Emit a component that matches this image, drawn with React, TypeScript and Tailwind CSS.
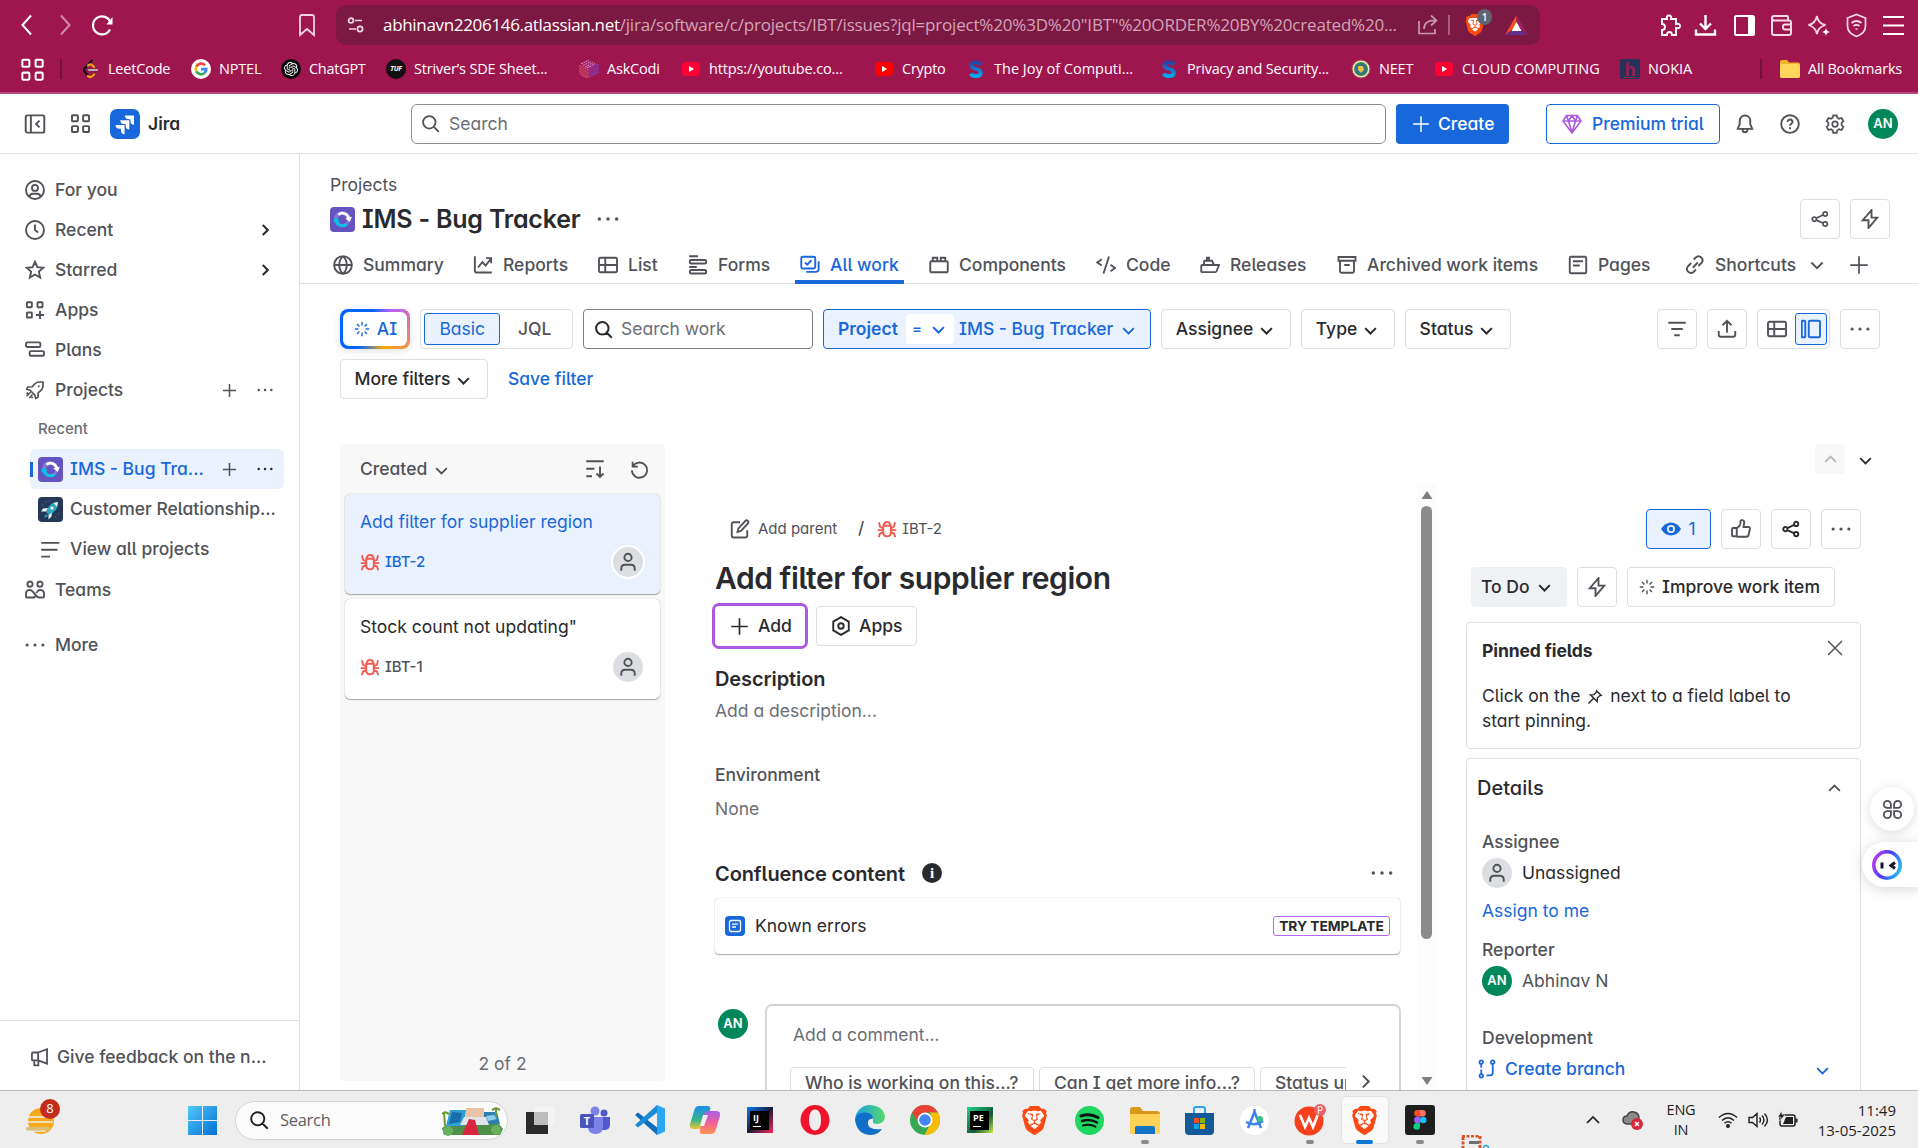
import React from 'react';
import { SiBrave, SiOpenai } from 'react-icons/si';

type IcProps = { d: string; s?: number; w?: number; fill?: string; className?: string };

/** 16-unit stroke icon. */
function Ic({ d, s = 20, w = 1.5, fill = 'none', className = '' }: IcProps) {
  return (
    <svg width={s} height={s} viewBox="0 0 16 16" fill={fill} stroke="currentColor" strokeWidth={w} className={'shrink-0 ' + className}>
      <path d={d} />
    </svg>
  );
}

const P = {
  search: 'M7 1.75a5.25 5.25 0 1 1 0 10.5a5.25 5.25 0 1 1 0-10.5M10.8 10.8L15 15',
  plus: 'M8 1v14M1 8h14',
  down: 'M3.5 6L8 10.5L12.5 6',
  up: 'M3.5 10L8 5.5L12.5 10',
  right: 'M6 3.5L10.5 8L6 12.5',
  grid: 'M2.2 1.75h3.1q.7 0 .7.7v3.1q0 .7-.7.7H2.2q-.7 0-.7-.7V2.45q0-.7.7-.7zM10.7 1.75h3.1q.7 0 .7.7v3.1q0 .7-.7.7h-3.1q-.7 0-.7-.7V2.45q0-.7.7-.7zM2.2 10h3.1q.7 0 .7.7v3.1q0 .7-.7.7H2.2q-.7 0-.7-.7v-3.1q0-.7.7-.7zM10.7 10h3.1q.7 0 .7.7v3.1q0 .7-.7.7h-3.1q-.7 0-.7-.7v-3.1q0-.7.7-.7z',
  apps: 'M2 1.75h3q.5 0 .5.5v3q0 .5-.5.5H2q-.5 0-.5-.5v-3q0-.5.5-.5zM10.5 1.75h3q.5 0 .5.5v3q0 .5-.5.5h-3q-.5 0-.5-.5v-3q0-.5.5-.5zM2 10h3q.5 0 .5.5v3q0 .5-.5.5H2q-.5 0-.5-.5v-3q0-.5.5-.5zM12 8.8v6.4M8.8 12h6.4',
  sidebar: 'M2.5 1.75h11q1.25 0 1.25 1.25v10q0 1.25-1.25 1.25h-11q-1.25 0-1.25-1.25V3q0-1.25 1.25-1.25zM5 2v12M11.3 5.5L8.8 8l2.5 2.5',
  bell: 'M8 1.2c-2.6 0-4.2 1.9-4.2 4.3v2.6L2.2 11.9h11.6L12.2 8.1V5.5c0-2.4-1.6-4.3-4.2-4.3zM6 12.2c0 3.2 4 3.2 4 0',
  help: 'M8 .95a7.05 7.05 0 1 1 0 14.1a7.05 7.05 0 1 1 0-14.1M6 6.4c0-2.7 4-2.6 4 0c0 1.4-2 1.4-2 3M8 10.6v1.5',
  gear: 'M8 5.8a2.2 2.2 0 1 1 0 4.4a2.2 2.2 0 1 1 0-4.4M6.6 1h2.8l.5 2l1.4.8l2-.6l1.4 2.4L13.3 7v2l1.4 1.4l-1.4 2.4l-2-.6l-1.4.8l-.5 2H6.6l-.5-2l-1.4-.8l-2 .6l-1.4-2.4L2.7 9V7L1.3 5.6l1.4-2.4l2 .6L6.1 3z',
  userCircle: 'M8 .8a7.2 7.2 0 1 1 0 14.4a7.2 7.2 0 1 1 0-14.4M8 3.9a2.4 2.4 0 1 1 0 4.8a2.4 2.4 0 1 1 0-4.8M3.6 13.4c.3-1.6 1.3-2.4 2.6-2.4h3.6c1.3 0 2.3.8 2.6 2.4',
  clock: 'M8 .8a7.2 7.2 0 1 1 0 14.4a7.2 7.2 0 1 1 0-14.4M8 3.5V8l2.5 2',
  star: 'M8 1.4l1.9 4.3l4.7.5l-3.5 3.1l1 4.7L8 11.6L3.9 14l1-4.7L1.4 6.2l4.7-.5z',
  plans: 'M1.9 1.9h9.3q1.1 0 1.1 1.1v1.5q0 1.1-1.1 1.1H1.9Q.8 5.6.8 4.5V3q0-1.1 1.1-1.1zM4.8 8.9h9.3q1.1 0 1.1 1.1v1.5q0 1.1-1.1 1.1H4.8q-1.1 0-1.1-1.1V10q0-1.1 1.1-1.1z',
  rocket: 'M14.4 1.6h-3.2C9 1.6 7.6 3 5.8 5.4L2.2 5.6L1.4 7.4L4 8.2l3.8 3.8l.8 2.6l1.8-.8l.2-3.6c2.4-1.8 3.8-3.2 3.8-5.4zM11 4.3v1.4M4.4 9.8L1.2 13M6 11.6L3.4 14.4M2.4 10L1.2 11.2M6.2 13.6l-1 1',
  lines: 'M1 2.25h14.5M1 7.75h13M1 13.25h7',
  teams: 'M4 1.2a2.1 2.1 0 1 1 0 4.2a2.1 2.1 0 1 1 0-4.2M12 1.2a2.1 2.1 0 1 1 0 4.2a2.1 2.1 0 1 1 0-4.2M4.5 14H1.6q-.8 0-.8-.8v-2.4c0-3 4-3.6 5.4-1.4l3.4 3.8q.8.8 1.8.8h3q.8 0 .8-.8v-2.4c0-3-4-3.6-5.4-1.4l-.8 1M4.2 14h3l1.1-1',
  globe: 'M8 .9a7.1 7.1 0 1 1 0 14.2a7.1 7.1 0 1 1 0-14.2M8 .9c-4 3.6-4 10.6 0 14.2c4-3.6 4-10.6 0-14.2M1 8h14',
  chart: 'M1.5 1v11.5q0 1.5 1.5 1.5h12M4 10l3.5-4.2l2.6 2.6L14.3 3M10.5 2.5h4v4',
  table: 'M2.2 2.2h11.6q1.4 0 1.4 1.4v8.8q0 1.4-1.4 1.4H2.2q-1.4 0-1.4-1.4V3.6q0-1.4 1.4-1.4zM5.8 2.4v11.4M1 8h14',
  forms: 'M1 1h7M2.4 4h11.2q.9 0 .9.9v1q0 .9-.9.9H2.4q-.9 0-.9-.9v-1q0-.9.9-.9zM1 9.6h6M2.4 12h11.2q.9 0 .9.9v1q0 .9-.9.9H2.4q-.9 0-.9-.9v-1q0-.9.9-.9z',
  allwork: 'M2.2 1.4h8.8q1.2 0 1.2 1.2v7q0 1.2-1.2 1.2H2.2Q1 10.8 1 9.6v-7q0-1.2 1.2-1.2zM4 6l1.8 1.8L9.2 4.2M14.9 5v6.2q0 2.3-2.3 2.3H5',
  components: 'M2 5h12q1 0 1 1v6.5q0 1.3-1.3 1.3H2.3Q1 13.8 1 12.5V6q0-1 1-1zM3 5V2.2h3.6V5M9.4 5V2.2H13V5',
  code: 'M4.6 3.4L1 6l3.6 2.4M10.4 1.2L6 14.8M11.6 7.8L15.2 10.4l-3.6 2.6',
  ship: 'M3.2 8V5.4q0-.8.8-.8h5.6L11.2 8M5.6 4.4V2.2h1.6v2M1 13.6V8.8q0-.8.8-.8h13.4l-2 5q-.3.7-1 .7H1.8Q1 13.7 1 12.9z',
  archive: 'M1.2 1.6h13.6v3H1.2zM2.4 4.8v8.2q0 1.2 1.2 1.2h8.8q1.2 0 1.2-1.2V4.8M5.8 8h4.4',
  page: 'M2.4 1.4h11.2q1 0 1 1v11.2q0 1-1 1H2.4q-1 0-1-1V2.4q0-1 1-1zM4 5h8M4 8.4h5.4',
  link: 'M6.2 10.2l4-4.2M7 3.6L8.6 2c3-2.8 7.2 1.4 4.6 4.4l-2.6 2.4M5 6.4L2.4 9c-2.6 3 1.4 7 4.4 4.6l2-2',
  share: 'M3 6.2a1.9 1.9 0 1 1 0 3.8a1.9 1.9 0 1 1 0-3.8M12.6 1.6a1.9 1.9 0 1 1 0 3.8a1.9 1.9 0 1 1 0-3.8M12.6 10.6a1.9 1.9 0 1 1 0 3.8a1.9 1.9 0 1 1 0-3.8M4.8 7.2l6-2.8M4.8 9l6 2.8',
  bolt: 'M9.2.9v6h4.6L6.8 15.2V9H2.2z',
  filter: 'M1 3h14M3.4 8h9.2M5.8 13h4.4',
  upload: 'M8 11V1.6M4.4 5L8 1.4L11.6 5M1.4 9.6v3q0 1.6 1.6 1.6h10q1.6 0 1.6-1.6v-3',
  panel: 'M1.2 1.4h1.6q.6 0 .6.6v12q0 .6-.6.6H1.2q-.6 0-.6-.6V2q0-.6.6-.6zM7.2 1.4h7q1 0 1 1v11.2q0 1-1 1h-7q-1 0-1-1V2.4q0-1 1-1z',
  sortDown: 'M1 1.8h14M1 7.8h6.6M1 13.8h4.6M12 6v8.4M9.2 11.6l2.8 2.8l2.8-2.8',
  refresh: 'M2.2 1.4v4.2h4.4M2.4 5.4a6.4 6.4 0 1 1-.8 3.2',
  bug: 'M5 5.4h6v5.4q0 3-3 3q-3 0-3-3zM5.4 5.4c0-4 5.2-4 5.2 0M5 7.6L2.4 6.2L1.6 2.6M11 7.6l2.6-1.4l.8-3.6M.6 8.9H5M11 8.9h4.4M5 10.6l-2.6 1l-1 3M11 10.6l2.6 1l1 3',
  person: 'M8 1.4a2.9 2.9 0 1 1 0 5.8a2.9 2.9 0 1 1 0-5.8M2.6 15v-1.6q0-3.2 3.2-3.2h4.4q3.2 0 3.2 3.2V15',
  edit: 'M8 2.6H3Q1.4 2.6 1.4 4.2v9Q1.4 14.8 3 14.8h9.2q1.6 0 1.6-1.6V9M12.4 1.4q.9-.7 1.8 0t.3 2L8.8 9.6L6 10.4l.7-2.9z',
  hexagon: 'M8 .9l6.2 3.6v7L8 15.1l-6.2-3.6v-7zM8 5.8a2.2 2.2 0 1 1 0 4.4a2.2 2.2 0 1 1 0-4.4',
  thumb: 'M1.6 7.2h3v6.6h-3q-.8 0-.8-.8V8q0-.8.8-.8zM4.6 7.4L7 5.2q.6-.8.6-3.4c.2-1.6 3.2-1.2 3 1.2L10 6.4h3.8q1.6 0 1.3 1.6l-1 4.6q-.3 1.6-1.8 1.6H4.6',
  close: 'M1.8 1.8l12.4 12.4M14.2 1.8L1.8 14.2',
  pin: 'M9.6 1.8l4.6 4.6l-1.6.4L10.4 9l-.2 3.6L3.4 5.8L7 5.6l2.2-2.2zM6.4 9.4L1.4 14.4',
  branch: 'M3.4 1.1a1.4 1.4 0 1 1 0 2.8a1.4 1.4 0 1 1 0-2.8M3.4 12a1.4 1.4 0 1 1 0 2.8a1.4 1.4 0 1 1 0-2.8M12.6 1.1a1.4 1.4 0 1 1 0 2.8a1.4 1.4 0 1 1 0-2.8M3.4 4v3M3.4 8.4V12M12.6 4v7q0 2-2 2H7.6',
  spark: 'M8 .8v3.6M8 11.6v3.6M.8 8h3.6M11.6 8h3.6M3 3l2.4 2.4M10.6 10.6L13 13M13 3l-2.4 2.4M5.4 10.6L3 13',
  horn: 'M1.600 3.800h4.400v6.600H1.600q-.8 0-.8-.8V4.600q0-.8.8-.8zM6 3.800L13.500 1v12.200L6 10.400M2.800 10.600v4h3.400v-4',
  clover: 'M6.8 6.8H4A2.7 2.7 0 1 1 6.8 4zM9.2 6.8V4A2.7 2.7 0 1 1 12 6.8zM6.8 9.2V12A2.7 2.7 0 1 1 4 9.2zM9.2 9.2H12A2.7 2.7 0 1 1 9.2 12z',
};

function Dots({ className = '', s = 20 }: { className?: string; s?: number }) {
  return (
    <svg width={s} height={s} viewBox="0 0 16 16" fill="currentColor" className={'shrink-0 ' + className}>
      <circle cx="1.7" cy="8" r="1.25" /><circle cx="8" cy="8" r="1.25" /><circle cx="14.3" cy="8" r="1.25" />
    </svg>
  );
}

/* ---------- browser chrome ---------- */

const YT = ({ c }: { c: string }) => (
  <svg width="20" height="20" viewBox="0 0 20 20"><rect x="1" y="3" width="18" height="14" rx="4" fill={c} /><path d="M8 7l5 3-5 3z" fill="#fff" /></svg>
);
const SIcon = () => (
  <svg width="20" height="20" viewBox="0 0 20 20" fill="none"><defs><linearGradient id="sg" x1="0" y1="0" x2="0" y2="1"><stop offset="0" stopColor="#2b3fa0" /><stop offset="1" stopColor="#00a8ee" /></linearGradient></defs><path d="M15 5.6C13 2.6 5.6 2 5.4 6.2c0 4.4 9.400 2.600 9.400 7.400C14.600 18.200 6.600 17.800 4.600 14.600" stroke="url(#sg)" strokeWidth="4" /></svg>
);

const bookmarks: { label: string; cls: string; icon: React.ReactNode; t: string }[] = [
  { label: 'LeetCode', cls: 'w-[111px]', t: 'tracking-[-0.2px]', icon: <svg width="20" height="20" viewBox="0 0 20 20" fill="none" strokeLinecap="round" strokeWidth="2.2"><path d="M12 1.500L5 9" stroke="#111" /><path d="M5 9q-2 2 0 4l3.500 4q2 1.600 4 0l2-2" stroke="#111" /><path d="M8 6.500q2-2 4-.5l2 2M8 17q2 2 4.500 0l1.800-1.800" stroke="#f5a31c" /><path d="M9 11h8" stroke="#b3b3b3" /></svg> },
  { label: 'NPTEL', cls: 'w-[90px]', t: 'tracking-[-0.2px]', icon: <svg width="20" height="20" viewBox="0 0 20 20" fill="none" strokeWidth="2.600"><circle cx="10" cy="10" r="10" fill="#fff" /><path d="M14 6.300A5.300 5.300 0 0 0 5.300 7.600" stroke="#ea4335" /><path d="M5.300 7.600a5.300 5.300 0 0 0 0 4.800" stroke="#fbbc05" /><path d="M5.300 12.400A5.300 5.300 0 0 0 13.400 14" stroke="#34a853" /><path d="M13.400 14q1.900-1.500 1.900-3.900H10" stroke="#4285f4" /></svg> },
  { label: 'ChatGPT', cls: 'w-[105px]', t: 'tracking-[-0.28px]', icon: <span className="flex h-5 w-5 items-center justify-center rounded-full bg-[#0a0a0a]"><SiOpenai size={14} /></span> },
  { label: 'Striver’s SDE Sheet...', cls: 'w-[193px]', t: 'tracking-[-0.17px]', icon: <span className="flex h-5 w-5 items-center justify-center rounded-full bg-[#111] text-[7px] font-bold italic tracking-tight">TUF</span> },
  { label: 'AskCodi', cls: 'w-[102px]', t: 'tracking-[-0.2px]', icon: <svg width="20" height="20" viewBox="0 0 20 20" fill="none" strokeWidth="1.100" strokeDasharray="2 .7"><path d="M1 6v9M3 7v10M5 8v10M7 9v10M9 10v9" stroke="#e0607a" /><path d="M2 5l8-4M4 6.500l8-4M6 8l8-4.500M8 9l8-4.500" stroke="#d98ad0" /><path d="M11 8v11M13 7v11M15 6v11M17 5v11M19 5v9" stroke="#7a4fd8" /></svg> },
  { label: 'https://youtube.co...', cls: 'w-[193px]', t: 'tracking-[-0.13px]', icon: <YT c="#ff0033" /> },
  { label: 'Crypto', cls: 'w-[92px]', t: 'tracking-[-0.25px]', icon: <YT c="#ff0000" /> },
  { label: 'The Joy of Computi...', cls: 'w-[193px]', t: 'tracking-[0px]', icon: <SIcon /> },
  { label: 'Privacy and Security...', cls: 'w-[192px]', t: 'tracking-[-0.2px]', icon: <SIcon /> },
  { label: 'NEET', cls: 'w-[83px]', t: 'tracking-[-0.2px]', icon: <svg width="20" height="20" viewBox="0 0 20 20"><circle cx="10" cy="10" r="9" fill="#e8e4d8" stroke="#b04a4a" /><circle cx="10" cy="10" r="6.200" fill="#2d6f9a" stroke="#3f8a3a" strokeWidth="1.500" /><path d="M7 7h5l1 4-3 3-3-3z" fill="#e3c23b" /></svg> },
  { label: 'CLOUD COMPUTING', cls: 'w-[186px]', t: 'tracking-[-0.1px]', icon: <YT c="#ff0033" /> },
  { label: 'NOKIA', cls: 'w-[100px]', t: 'tracking-[0px]', icon: <span className="flex h-5 w-5 items-center justify-center rounded-[2px] bg-[#27325a] text-[17px] leading-none font-bold text-[#9c1c50] underline">h</span> },
];

/** Orange shield with the white lion showing through its cut-outs. */
function Brave({ s = 24 }: { s?: number }) {
  return (
    <span className="relative flex shrink-0">
      <svg width={s} height={s} viewBox="0 0 24 24" className="absolute inset-0"><path d="M5 4h14l1 6-2.500 8L12 22l-5.500-4L4 10z" fill="#fff" /></svg>
      <SiBrave size={s} className="relative text-[#fb4b12]" />
    </span>
  );
}

function BrowserChrome() {
  const st = { fill: 'none', stroke: 'currentColor', strokeWidth: 2 } as const;
  return (
    <div className="h-[94px] border-b-2 border-[#b34a7b] bg-[#9f164f] font-['Open_Sans','Noto_Sans',sans-serif] text-white">
      <div className="flex h-[50px] items-center">
        <svg className="ml-[17px]" width="20" height="24" viewBox="0 0 20 24" {...st}><path d="M14 2.500L5.500 12l8.500 9.500" /></svg>
        <svg className="ml-[18px] opacity-50" width="20" height="24" viewBox="0 0 20 24" {...st}><path d="M6 2.500l8.500 9.500L6 21.500" /></svg>
        <svg className="ml-[15px]" width="24" height="24" viewBox="0 0 24 24" {...st}><path d="M20 16.500a9 9 0 1 1 .5-7" strokeWidth="2.200" /><path d="M22.500 4v7.500h-6z" fill="currentColor" stroke="none" /></svg>
        <svg className="ml-[181px]" width="24" height="24" viewBox="0 0 24 24" fill="none" stroke="#f0d6e2" strokeWidth="1.800"><path d="M5 4q0-2 2-2h10q2 0 2 2v18l-7-6-7 6z" /></svg>
        <div className="ml-[17px] flex h-10 w-[1204px] items-center rounded-[10px] bg-[#7b1942]">
          <svg className="ml-[11px]" width="18" height="18" viewBox="0 0 18 18" fill="none" stroke="#f0d6e2" strokeWidth="1.700"><circle cx="4" cy="4.500" r="2.400" /><path d="M8 4.500h7M2 13h7" /><circle cx="13" cy="13" r="2.600" /></svg>
          <span className="ml-[18px] w-[1020px] shrink-0 whitespace-nowrap text-[17px] tracking-[-0.19px] text-[#d3a3b8]"><span className="tracking-[-0.32px] text-white">abhinavn2206146.atlassian.net</span>/jira/software/c/projects/IBT/issues?jql=project%20%3D%20"IBT"%20ORDER%20BY%20created%20...</span>
          <svg className="ml-[15px]" width="20" height="22" viewBox="0 0 20 22" fill="none" stroke="#c796ad" strokeWidth="1.700"><path d="M1 7v12.500h16V15M6 15q0-9 11.500-8.500M13 1.500l5.500 5-5.500 5" /></svg>
          <span className="ml-[10px] h-5 w-[2px] bg-[#a5607f]" />
          <span className="relative ml-[14px]"><Brave s={22} /><span className="absolute -top-[5px] left-[13px] flex h-4 w-[15px] items-center justify-center rounded-full bg-[#5f6470] text-[10px] font-semibold">1</span></span>
          <svg className="ml-[19px]" width="23" height="20" viewBox="0 0 23 20"><path d="M11.500 0L0 20l11.500-9z" fill="#ff4b20" /><path d="M11.500 0L23 20l-11.500-9z" fill="#9e1f63" /><path d="M0 20h23l-11.500-7z" fill="#662d91" /><path d="M11.500 7l5 9h-10z" fill="#fff" /></svg>
        </div>
        <div className="ml-[119px] flex items-center gap-[14px]">
          <svg width="23" height="23" viewBox="0 0 23 23" {...st} strokeWidth="1.900"><path d="M3 5h5q-1-3.500 2-3.500T12 5h5v5q4-1 4 2t-4 2v7h-4q0-3-2.500-3T8 21H3v-5q3 0 3-3t-3-3z" /></svg>
          <svg className="relative -left-[2px]" width="23" height="23" viewBox="0 0 23 23" {...st} strokeWidth="2.400"><path d="M11.500 1v14M6 9.500l5.500 5.500L17 9.500M2 15.500v5h19v-5" /></svg>
          <svg width="23" height="23" viewBox="0 0 23 23" {...st}><rect x="2" y="2" width="19" height="19" rx="1.500" /><path d="M15 2h6v19h-6z" fill="currentColor" stroke="none" /></svg>
          <svg width="23" height="23" viewBox="0 0 23 23" {...st} stroke="#f3dbe6"><path d="M18 6V3q0-1-1-1H4Q2 2 2 4t2 2.500h15q2 0 2 2V19q0 2-2 2H4q-2 0-2-2V4M21 10.500h-6q-2 0-2 2v1q0 2 2 2h6" /></svg>
          <svg width="24" height="23" viewBox="0 0 24 23" {...st} stroke="#f3dbe6" strokeWidth="1.800"><path d="M10 2q1 7.500 8.500 9Q11 13 10 20Q8.500 13 1.500 11Q8.500 9.500 10 2z" /><path d="M19 14q.5 3.500 4 4-3.500.5-4 4-.5-3.500-4-4 3.500-.5 4-4z" fill="currentColor" stroke="none" /></svg>
          <svg width="23" height="25" viewBox="0 0 23 25" {...st} stroke="#f3dbe6" strokeWidth="1.700"><path d="M11.500 1.500l9 3.500v8q0 7-9 10.500q-9-3.500-9-10.500V5z" /><path d="M6.500 10q5-4 10 0M8.500 13q3-2.400 6 0M10.500 16h2" /></svg>
          <svg width="23" height="23" viewBox="0 0 23 23" {...st}><path d="M1 3h21M1 11.500h21M1 20h21" /></svg>
        </div>
      </div>
      <div className="flex h-[38px] items-center whitespace-nowrap text-[14.500px]">
        <Ic d={P.grid} s={25} w={1.300} className="ml-[20px]" />
        <span className="ml-[15px] h-5 w-[2px] bg-[#6d1238]" />
        <div className="ml-[18px] flex w-[1640px]">
          {bookmarks.map((b) => (
            <div key={b.label} className={'flex shrink-0 items-center gap-2 ' + b.cls}>
              <span className="w-5 shrink-0">{b.icon}</span><span className={b.t}>{b.label}</span>
            </div>
          ))}
        </div>
        <span className="ml-[40px] h-5 w-[2px] bg-[#6d1238]" />
        <svg className="ml-[18px]" width="20" height="18" viewBox="0 0 20 18"><path d="M0 2q0-2 2-2h5l2 2.500h9q2 0 2 2V16q0 2-2 2H2q-2 0-2-2z" fill="#f0b429" /><rect y="4" width="20" height="14" rx="2" fill="#ffd659" /></svg>
        <span className="ml-2 tracking-[-0.2px]">All Bookmarks</span>
      </div>
    </div>
  );
}

/* ---------- Jira ---------- */

function ProjectIcon({ s = 25 }: { s?: number }) {
  return (
    <svg width={s} height={s} viewBox="0 0 25 25" className="shrink-0" fill="none">
      <rect width="25" height="25" rx="4" fill="#6554c0" />
      <circle cx="12" cy="12" r="8" fill="#8777d9" />
      <circle cx="12.500" cy="12.500" r="4.600" fill="#6554c0" />
      <path d="M8.400 7.700A6.300 6.300 0 0 1 18.600 10.900" stroke="#fff" strokeWidth="2.800" /><path d="M15.300 11.300l6.500-1.500-2 5.200z" fill="#fff" />
      <path d="M16.600 17.300A6.300 6.300 0 0 1 6.400 14.100" stroke="#00c7e6" strokeWidth="2.800" /><path d="M9.700 13.700l-6.500 1.500 2-5.200z" fill="#00c7e6" />
    </svg>
  );
}

function CrmIcon() {
  return (
    <svg width="25" height="25" viewBox="0 0 25 25" className="shrink-0">
      <rect width="25" height="25" rx="4" fill="#253858" />
      <path d="M20 5q-7 0-10 6l-2 4 3 3 4-2.500Q20.500 12 20 5z" fill="#2ba9bd" />
      <path d="M20 5l-4.500 1L19 9.500zM10 11l-5 .5-2 3h5zM14 15.500l-.5 4-3 3V18z" fill="#e4f3f6" />
      <path d="M8 17l-2 4 4-2z" fill="#2ba9bd" /><circle cx="14" cy="11" r="1.600" fill="#fff" />
      <path d="M7 5h1M11 4h1M20 17h1M17 20h1M4 8h1" stroke="#5e7aa5" />
    </svg>
  );
}

function Avatar() {
  return <span className="flex h-[30px] w-[30px] shrink-0 items-center justify-center rounded-full bg-[#00875a] text-[13px] font-semibold text-white">AN</span>;
}
function Ghost({ ring = false }: { ring?: boolean }) {
  return (
    <span className={'flex h-[30px] w-[30px] shrink-0 items-center justify-center rounded-full bg-[#dddee1] text-[#505258] ' + (ring ? 'ring-2 ring-white' : '')}>
      <Ic d={P.person} s={20} />
    </span>
  );
}

function Header() {
  return (
    <header className="flex h-[60px] items-center border-b border-[#dddee1] text-[#505258]">
      <Ic d={P.sidebar} s={22} className="ml-6" w={1.4} />
      <Ic d={P.grid} s={21} className="ml-[24px]" />
      <svg className="ml-[19px]" width="30" height="30" viewBox="0 0 30 30"><rect width="30" height="30" rx="7" fill="#1868db" /><path d="M24 6.500v9.200q-3.600 0-3.600-4V10.200h-1.600q-3.800 0-3.800-3.700zM19.300 11.300v9.200q-3.600 0-3.600-4V15h-1.600q-3.800 0-3.800-3.700zM14.600 16.100v9.200q-3.600 0-3.600-4v-1.500H9.400q-3.800 0-3.800-3.700z" fill="#fff" /></svg>
      <span className="ml-2 w-[263px] pt-[2px] text-[17.500px] font-semibold text-[#292a2e]">Jira</span>
      <div className="flex h-10 w-[975px] items-center rounded-md border border-[#8c8f97] pl-[9px]">
        <Ic d={P.search} s={19} /><span className="ml-[9px] pt-px text-[17.500px] text-[#6b6e76]">Search</span>
      </div>
      <div className="ml-[10px] flex h-10 w-[113px] items-center rounded-[4px] bg-[#1868db] pl-4 font-medium text-white"><Ic d={P.plus} s={18} w={1.300} /><span className="ml-[8px] pt-px text-[17.500px]">Create</span></div>
      <div className="ml-[37px] flex h-10 w-[174px] items-center rounded-[4px] border border-[#1868db] pl-[15px] font-medium text-[#1868db]">
        <svg width="20" height="20" viewBox="0 0 20 20" fill="none" stroke="#af59e1" strokeWidth="1.600"><path d="M4.500 1.500h11L19 7l-9 12L1 7zM1 7h18M6.500 7L10 1.500 13.500 7 10 18.500zM4.500 1.500L6.500 7M15.500 1.500L13.500 7" /></svg>
        <span className="ml-[10px] pt-px text-[17.500px]">Premium trial</span>
      </div>
      <Ic d={P.bell} s={20} className="ml-[15px]" /><Ic d={P.help} s={20} className="ml-[25px]" /><Ic d={P.gear} s={20} w={1.4} className="ml-[25px]" />
      <span className="ml-[23px]"><Avatar /></span>
    </header>
  );
}

function Row({ icon, label, children }: { icon: React.ReactNode; label: string; children?: React.ReactNode }) {
  return <div className="flex h-10 items-center pr-[10px]">{icon}<span className="ml-[10px] grow">{label}</span>{children}</div>;
}

function Sidebar() {
  return (
    <aside className="flex h-full w-[300px] shrink-0 flex-col border-r border-[#dddee1] text-[17.500px] font-medium text-[#505258]">
      <div className="grow pt-4 pr-[15px] pl-[25px]">
        <Row icon={<Ic d={P.userCircle} />} label="For you" />
        <Row icon={<Ic d={P.clock} />} label="Recent"><Ic d={P.right} s={18} w={1.800} className="text-[#292a2e]" /></Row>
        <Row icon={<Ic d={P.star} />} label="Starred"><Ic d={P.right} s={18} w={1.800} className="text-[#292a2e]" /></Row>
        <Row icon={<Ic d={P.apps} />} label="Apps" />
        <Row icon={<Ic d={P.plans} />} label="Plans" />
        <Row icon={<Ic d={P.rocket} w={1.350} />} label="Projects"><Ic d={P.plus} s={15} w={1.600} className="mr-[20px]" /><Dots s={16} className="mr-[1px]" /></Row>
        <div className="flex h-[39px] items-center pl-[13px] text-[15px] text-[#6b6e76]">Recent</div>
        <div className="ml-[5px] flex h-10 items-center rounded-[5px] bg-[#e9f2fe] text-[#1868db]">
          <span className="h-[15px] w-[3px] bg-[#1868db]" />
          <span className="ml-[5px]"><ProjectIcon /></span><span className="ml-[7px] w-[140px] pt-px">IMS - Bug Tra...</span>
          <Ic d={P.plus} s={15} w={1.600} className="ml-[12px] text-[#505258]" /><Dots s={16} className="ml-[20px] text-[#292a2e]" />
        </div>
        <div className="flex h-10 items-center whitespace-nowrap pl-[13px] pt-px"><CrmIcon /><span className="ml-[7px]">Customer Relationship...</span></div>
        <div className="flex h-10 items-center pl-[15px] pt-px"><Ic d={P.lines} /><span className="ml-[10px]">View all projects</span></div>
        <div className="h-px" />
        <Row icon={<Ic d={P.teams} />} label="Teams" />
        <div className="h-[15px]" />
        <Row icon={<Dots />} label="More" />
      </div>
      <div className="flex h-[70px] items-center border-t border-[#dddee1] pt-1 pl-[31px]"><Ic d={P.horn} s={19} /><span className="ml-[7px]">Give feedback on the n...</span></div>
    </aside>
  );
}

const box = 'flex h-10 items-center justify-center rounded-[4px] border border-[#dddee1] shrink-0 ';

const tabs: { label: string; icon: string; cls: string; active?: boolean }[] = [
  { label: 'Summary', icon: P.globe, cls: 'w-[140px]' },
  { label: 'Reports', icon: P.chart, cls: 'w-[125px]' },
  { label: 'List', icon: P.table, cls: 'w-[90px]' },
  { label: 'Forms', icon: P.forms, cls: 'w-[112px]' },
  { label: 'All work', icon: P.allwork, cls: 'w-[129px]', active: true },
  { label: 'Components', icon: P.components, cls: 'w-[167px]' },
  { label: 'Code', icon: P.code, cls: 'w-[104px]' },
  { label: 'Releases', icon: P.ship, cls: 'w-[137px]' },
  { label: 'Archived work items', icon: P.archive, cls: 'w-[231px]' },
  { label: 'Pages', icon: P.page, cls: 'w-[117px]' },
  { label: 'Shortcuts', icon: P.link, cls: 'w-[122px]' },
];

function ProjectHeader() {
  return (
    <div>
      <div className="flex h-[62px] items-center pl-[30px] text-[17.500px] text-[#505258]">Projects</div>
      <div className="-mt-[17px] flex h-10 items-center pl-[30px]">
        <ProjectIcon /><h1 className="ml-[7px] w-[235px] pt-[2px] text-[25px] font-semibold tracking-[-0.2px] text-[#292a2e]">IMS - Bug Tracker</h1><Dots s={22} className="text-[#505258]" />
        <div className={box + 'ml-auto w-10 text-[#505258]'}><Ic d={P.share} s={18} /></div>
        <div className={box + 'mr-[28px] ml-[10px] w-10 text-[#505258]'}><Ic d={P.bolt} /></div>
      </div>
      <div className="flex h-[45px] border-b border-[#dddee1] pl-[33px] text-[17.500px] font-medium text-[#505258]">
        {tabs.map((t) => (
          <div key={t.label} className={'relative flex h-[45px] shrink-0 items-center whitespace-nowrap pt-[7px] ' + t.cls + (t.active ? ' text-[#1868db]' : '')}>
            <Ic d={t.icon} /><span className="ml-[10px]">{t.label}</span>
            {t.active && <span className="absolute bottom-0 -left-[5px] h-1 w-[109px] bg-[#1868db]" />}
          </div>
        ))}
        <span className="flex h-[45px] items-center pt-[7px]"><Ic d={P.down} className="" /><Ic d={P.plus} s={20} w={1.4} className="ml-[22px]" /></span>
      </div>
    </div>
  );
}

function Pick({ label, cls }: { label: string; cls: string }) {
  return <div className={box + 'text-[#292a2e] ' + cls}><span>{label}</span><Ic d={P.down} s={19} w={1.700} className="ml-[4px] translate-y-px" /></div>;
}

function Filters() {
  return (
    <div className="pt-[25px] pl-10 text-[17.500px] font-medium">
      <div className="flex h-10">
        <div className="h-10 w-[70px] rounded-[8px] bg-[conic-gradient(from_45deg,#bf63f3,#ffa900_30%,#0065ff_50%,#0065ff_85%,#bf63f3)] p-[3px] shadow-[0_2px_8px_rgba(0,0,0,0.12)]">
          <div className="flex h-full items-center justify-center rounded-[6px] bg-white text-[#1868db]"><Ic d={P.spark} s={16} w={1.400} className="ml-px" /><span className="ml-[7px] pt-px">AI</span></div>
        </div>
        <div className={box + 'ml-[10px] w-[153px] p-[3px] text-[#505258]'}><span className="flex h-8 w-[78px] items-center justify-center rounded-[3px] border border-[#1868db] bg-[#e9f2fe] pt-px font-normal text-[#1868db]">Basic</span><span className="w-[70px] pt-px text-center">JQL</span></div>
        <div className="ml-[10px] flex h-10 w-[230px] items-center rounded-[4px] border border-[#7d818a] pl-[10px] font-normal"><Ic d={P.search} s={19} w={1.700} className="text-[#292a2e]" /><span className="ml-[8px] text-[#6b6e76]">Search work</span></div>
        <div className="ml-[10px] flex h-10 w-[328px] items-center rounded-[4px] border border-[#1868db] bg-[#e9f2fe] pl-[14px] text-[#1868db]">
          <span className="w-[68px] font-semibold">Project</span>
          <span className="flex h-[30px] w-[48px] items-center rounded-[4px] bg-white pt-px pl-[6px] text-[15px]">=<Ic d={P.down} s={19} w={1.700} className="ml-[7px]" /></span>
          <span className="ml-[5px] w-[160px]">IMS - Bug Tracker</span><Ic d={P.down} s={19} w={1.600} className="translate-y-px" />
        </div>
        <Pick label="Assignee" cls="ml-[10px] w-[130px]" />
        <Pick label="Type" cls="ml-[10px] w-[94px]" />
        <Pick label="Status" cls="ml-[10px] w-[106px]" />
        <div className="mr-[38px] ml-auto flex gap-[10px] text-[#505258]">
          <div className={box + 'w-10'}><Ic d={P.filter} /></div>
          <div className={box + 'w-10'}><Ic d={P.upload} /></div>
          <div className={box + 'w-[73px] pr-[2px]'}><span className="flex w-[36px] justify-center"><Ic d={P.table} /></span><span className="flex h-8 w-8 items-center justify-center rounded-[3px] border border-[#1868db] bg-[#e9f2fe] text-[#1868db]"><Ic d={P.panel} /></span></div>
          <div className={box + 'w-10'}><Dots /></div>
        </div>
      </div>
      <div className="mt-[10px] flex h-10 items-center"><Pick label="More filters" cls="w-[148px]" /><span className="ml-[20px] text-[#1868db]">Save filter</span></div>
    </div>
  );
}

function Card({ title, id, selected }: { title: string; id: string; selected?: boolean }) {
  return (
    <div className={'h-[100px] rounded-[5px] px-[15px] pt-[8px] shadow-[0_1px_1px_rgba(30,31,33,0.35),0_0_1px_rgba(30,31,33,0.4)] ' + (selected ? 'bg-[#e9f2fe] text-[#1868db]' : 'bg-white text-[#292a2e]')}>
      <div className="flex h-10 items-center whitespace-nowrap">{title}</div>
      <div className="flex h-10 items-center"><Ic d={P.bug} className="text-[#f15b50]" /><span className={'ml-[5px] text-[15px] font-medium ' + (selected ? '' : 'text-[#505258]')}>{id}</span><span className="ml-auto mr-[2px]"><Ghost ring={selected} /></span></div>
    </div>
  );
}

function IssueList() {
  return (
    <div className="flex h-[637px] w-[325px] shrink-0 flex-col rounded-[5px] bg-[#f8f8f8] text-[17.500px]">
      <div className="flex h-[50px] items-center pl-5 text-[#505258]"><span className="font-medium">Created</span><Ic d={P.down} s={19} className="ml-[5px] translate-y-px" /><Ic d={P.sortDown} s={20} className="mr-[25px] ml-auto" /><Ic d={P.refresh} s={19} className="mr-4" /></div>
      <div className="flex flex-col gap-[5px] px-[5px]"><Card title="Add filter for supplier region" id="IBT-2" selected /><Card title={'Stock count not updating"'} id="IBT-1" /></div>
      <div className="mt-auto flex h-[36px] justify-center text-[#6b6e76]"><span className="pt-[6px]">2 of 2</span></div>
    </div>
  );
}

function Issue() {
  const chip = 'flex h-[31px] shrink-0 items-center rounded-t-[4px] border border-[#dddee1] whitespace-nowrap pl-[14px] leading-[24px] ';
  return (
    <div className="h-[606px] w-[752px] shrink-0 overflow-hidden pt-[25px] pl-[50px] text-[17.500px] text-[#292a2e]">
      <div className="flex h-10 items-center pl-[15px] text-[15px] font-medium text-[#505258]">
        <Ic d={P.edit} /><span className="ml-2 w-[100px] font-normal">Add parent</span><span className="text-[17px]">/</span><Ic d={P.bug} className="ml-[13px] text-[#f15b50]" /><span className="ml-[5px] font-normal">IBT-2</span>
      </div>
      <h2 className="flex h-[57px] items-center pt-[2px] text-[30px] font-semibold tracking-[-0.440px]">Add filter for supplier region</h2>
      <div className="flex h-10 gap-[11px] font-medium">
        <div className="flex h-10 w-[90px] items-center rounded-[4px] pl-[15px] ring-3 ring-[#af59e1]"><Ic d={P.plus} s={19} w={1.4} /><span className="ml-[9px]">Add</span></div>
        <div className="flex h-10 w-[101px] items-center rounded-[4px] border border-[#dddee1] pl-[14px]"><Ic d={P.hexagon} /><span className="ml-2">Apps</span></div>
      </div>
      <h3 className="mt-[19px] flex h-7 items-center text-[20px] font-semibold tracking-[-0.1px]">Description</h3>
      <div className="-mt-px flex h-[38px] items-center text-[#6b6e76]">Add a description...</div>
      <div className="mt-[31px] flex h-7 items-center font-medium text-[#505258]">Environment</div>
      <div className="flex h-10 items-center text-[#6b6e76]">None</div>
      <div className="mt-[30px] flex h-7 items-center">
        <h3 className="w-[207px] pt-px text-[20px] font-semibold tracking-[-0.1px]">Confluence content</h3>
        <span className="flex h-5 w-5 items-center justify-center rounded-full bg-[#292a2e] font-['Liberation_Serif',serif] text-[15px] font-bold text-white">i</span>
        <Dots s={22} className="ml-auto mr-6 text-[#505258]" />
      </div>
      <div className="mt-[11px] flex h-[56px] w-[685px] items-center rounded-[4px] px-[10px] shadow-[0_1px_1px_rgba(30,31,33,0.35),0_0_1px_rgba(30,31,33,0.4)]">
        <svg width="20" height="20" viewBox="0 0 20 20" fill="none" stroke="#fff" strokeWidth="1.300"><rect width="20" height="20" rx="4" fill="#1868db" stroke="none" /><rect x="4.500" y="4.500" width="11" height="11" rx="1.500" /><path d="M7 8.200h6M7 11h4" /></svg>
        <span className="ml-[10px]">Known errors</span>
        <span className="ml-auto flex h-5 w-[117px] items-center justify-center rounded-[3px] border border-[#bf63f3] text-[13.750px] font-bold whitespace-nowrap">TRY TEMPLATE</span>
      </div>
      <div className="mt-[50px] flex">
        <span className="mt-[5px] ml-[3px]"><Avatar /></span>
        <div className="ml-[17px] h-[120px] w-[636px] overflow-hidden rounded-[7px] border-2 border-[#d5d7db] border-t-[#cfd1d6]">
          <div className="flex h-[58px] items-center pl-[26px] text-[#6b6e76]">Add a comment...</div>
          <div className="mt-[3px] ml-[23px] flex text-[#505258]">
            <div className="flex w-[556px] shrink-0 gap-[5px] overflow-hidden font-medium">
              <div className={chip + 'w-[244px]'}>Who is working on this...?</div>
              <div className={chip + 'w-[216px]'}>Can I get more info...?</div>
              <div className={chip + 'w-[160px]'}>Status update...</div>
            </div>
            <Ic d={P.right} s={21} className="mt-[4px] ml-[9px]" />
          </div>
        </div>
      </div>
    </div>
  );
}

function Scrollbar() {
  return (
    <div className="flex h-[606px] w-[19px] shrink-0 flex-col items-center bg-[#fcfcfc]">
      <svg width="12" height="10" viewBox="0 0 12 10" className="mt-[6px]"><path d="M6 1l5.500 8H.5z" fill="#7f7f7f" /></svg>
      <div className="mt-[6px] h-[433px] w-[11px] rounded-full bg-[#8b8b8b]" />
      <svg width="12" height="10" viewBox="0 0 12 10" className="mt-auto mb-1"><path d="M6 9L.5 1h11z" fill="#7f7f7f" /></svg>
    </div>
  );
}

function Details() {
  return (
    <div className="h-[606px] grow overflow-hidden pt-[25px] pr-[57px] pl-[30px] text-[17.500px] text-[#292a2e]">
      <div className="flex h-10 justify-end gap-[10px] text-[#505258]">
        <div className="flex w-[65px] items-center justify-center gap-[7px] rounded-[4px] border border-[#1868db] bg-[#e9f2fe] text-[#1868db]">
          <svg width="20" height="16" viewBox="0 0 20 16"><path d="M0 8Q4 1.500 10 1.500T20 8q-4 6.500-10 6.500T0 8z" fill="#1868db" /><circle cx="10" cy="8" r="4" fill="#e9f2fe" /><circle cx="10" cy="8" r="2.200" fill="#1868db" /></svg>1
        </div>
        <div className={box + 'w-10'}><Ic d={P.thumb} /></div>
        <div className={box + 'w-10 text-[#292a2e]'}><Ic d={P.share} s={18} w={1.700} /></div>
        <div className={box + 'w-10'}><Dots /></div>
      </div>
      <div className="mt-[18px] flex h-10 gap-[10px] pl-[5px] font-medium">
        <div className="flex w-[96px] items-center rounded-[4px] bg-[#f0f1f2] pl-[10px] whitespace-nowrap"><span className="w-[54px]">To Do</span><Ic d={P.down} s={19} w={1.700} /></div>
        <div className={box + 'w-10 text-[#505258]'}><Ic d={P.bolt} /></div>
        <div className="flex w-[208px] items-center rounded-[4px] border border-[#dddee1] pl-[11px] whitespace-nowrap"><Ic d={P.spark} s={16} w={1.400} className="text-[#505258]" /><span className="ml-[7px]">Improve work item</span></div>
      </div>
      <div className="relative mt-[15px] h-[127px] rounded-[4px] border border-[#dddee1] px-[15px] pt-[14px]">
        <div className="flex h-7 items-center font-bold tracking-[-0.1px]">Pinned fields</div>
        <Ic d={P.close} s={18} w={1.300} className="absolute top-[16px] right-4 text-[#505258]" />
        <p className="mt-[18px] leading-[25px]">Click on the <Ic d={P.pin} s={16} w={1.400} className="mx-[2px] inline-block" /> next to a field label to<br />start pinning.</p>
      </div>
      <div className="mt-[9px] h-[400px] rounded-[4px] border border-[#dddee1]">
        <div className="flex h-[58px] items-center justify-between pr-4 pl-[10px] text-[20px] font-medium">Details<Ic d={P.up} s={19} className="text-[#505258]" /></div>
        <div className="pt-[2px] pl-[15px]">
          <div className="mt-[9px] flex h-7 items-center font-medium text-[#505258]">Assignee</div>
          <div className="flex h-[34px] items-center"><Ghost /><span className="ml-[10px]">Unassigned</span></div>
          <div className="mt-[5px] flex h-8 items-center text-[#1868db]">Assign to me</div>
          <div className="mt-[9px] flex h-7 items-center font-medium text-[#505258]">Reporter</div>
          <div className="flex h-[34px] items-center text-[#505258]"><Avatar /><span className="ml-[10px] pt-px">Abhinav N</span></div>
          <div className="mt-[26px] flex h-7 items-center font-medium text-[#505258]">Development</div>
          <div className="-ml-[5px] flex h-[34px] items-center font-medium text-[#1868db]"><Ic d={P.branch} w={1.400} /><span className="ml-2">Create branch</span><Ic d={P.down} s={19} className="mr-[28px] ml-auto translate-y-px" /></div>
        </div>
      </div>
    </div>
  );
}

function Floaters() {
  return (
    <>
      <div className="absolute top-[787px] left-[1870px] flex h-[44px] w-[44px] items-center justify-center rounded-full bg-white text-[#505258] shadow-[0_2px_12px_rgba(0,0,0,0.14)]"><Ic d={P.clover} s={21} w={1.400} /></div>
      <div className="absolute top-[842px] left-[1862px] flex h-[45px] w-[60px] items-center rounded-l-full bg-white pl-[9px] shadow-[0_2px_14px_rgba(0,0,0,0.16)]">
        <svg width="32" height="32" viewBox="0 0 32 32" fill="none"><defs><linearGradient id="lg" x1="0" y1="0.300" x2="1" y2="0.700"><stop offset="0" stopColor="#b43df0" /><stop offset="0.450" stopColor="#4b3df0" /><stop offset="1" stopColor="#27b8f0" /></linearGradient></defs><circle cx="16" cy="16" r="13.200" stroke="url(#lg)" strokeWidth="3.600" /><path d="M11 13.500v6M24 13.500l-4 3 4 3" stroke="#17132b" strokeWidth="3" /></svg>
      </div>
    </>
  );
}

/* ---------- taskbar ---------- */

const slot = 'flex h-full w-[55px] shrink-0 flex-col items-center justify-center relative';

function Slot({ children, dot }: { children: React.ReactNode; dot?: boolean }) {
  return <div className={slot}>{children}{dot && <span className="absolute bottom-[4px] h-[4px] w-2 rounded-full bg-[#8a8a8a]" />}</div>;
}

function Tile({ from, label }: { from: string; label: string }) {
  return (
    <span className={'flex h-[26px] w-[26px] items-center justify-center ' + from}>
      <span className="flex h-[19px] w-[19px] flex-col bg-black pt-[2px] pl-[3px] text-[9px] leading-[9px] font-bold text-white">{label}<span className="mt-[4px] h-px w-2 bg-white" /></span>
    </span>
  );
}

function Taskbar() {
  return (
    <footer className="relative flex h-[58px] items-center overflow-hidden border-t border-[#b9b9b9] bg-[#eeeeee] pt-px font-['Open_Sans','Noto_Sans',sans-serif] text-[#1f1f1f]">
      <div className="relative ml-[26px] h-[32px] w-[30px]">
        <svg width="30" height="32" viewBox="0 0 30 32"><circle cx="15" cy="17" r="13" fill="#f7a81b" /><path d="M2 13h22M1 18h26M2 27h18" stroke="#eeeeee" strokeWidth="1.500" /><rect x="0" y="23" width="24" height="3.500" rx="1.700" fill="#d9c07a" /></svg>
        <span className="absolute -top-[5px] left-[14px] flex h-5 w-5 items-center justify-center rounded-full bg-[#c42b1c] text-[13px] text-white">8</span>
      </div>
      <svg className="ml-[132px]" width="29" height="29" viewBox="0 0 29 29"><defs><linearGradient id="wg" x1="0" y1="0" x2="1" y2="1"><stop offset="0" stopColor="#53c8fa" /><stop offset="1" stopColor="#0070d2" /></linearGradient></defs><path d="M0 0h14v14H0zM15 0h14v14H15zM0 15h14v14H0zM15 15h14v14H15z" fill="url(#wg)" /></svg>
      <div className="ml-[18px] flex h-[39px] w-[273px] items-center rounded-full border border-[#d4d4d4] bg-[#fbfbfb] pl-[13px]">
        <Ic d={P.search} s={20} w={1.500} className="text-[#1f1f1f]" /><span className="ml-[11px] grow text-[16.500px] tracking-[-0.300px] text-[#5f5f5f]">Search</span>
        <svg width="62" height="32" viewBox="0 0 62 32" className="mr-[3px]"><path d="M2 31L0 24l8-5h48l5 6-3 6z" fill="#4f8f4a" /><path d="M8 6h16l-2 16H4z" fill="#2f9fd6" /><path d="M10 8l10 1-2 9-11 2z" fill="#1a6ea8" /><path d="M24 4h18v9H24z" fill="#e9c3a8" /><path d="M42 8h13l3 12H42z" fill="#2d7fb0" /><path d="M44 12l8-1 3 4-9 2z" fill="#8ed0ec" /><path d="M22 13h22l3 8H18z" fill="#dfe5ea" /><path d="M27 15l6 1 4 15H20z" fill="#d7263d" /><path d="M3 22l-1-14M3 8L0 10M3 8l4 2M54 5v8M54 4l-4 2M54 4l4 2" stroke="#6a9a3a" strokeWidth="2" /><circle cx="6" cy="27" r="5" fill="#69b05e" /><circle cx="54" cy="26" r="5" fill="#69b05e" /></svg>
      </div>
      <div className="ml-[4px] flex h-full">
        <Slot><svg width="30" height="30" viewBox="0 0 30 30"><path d="M1 7h22v22H1z" fill="#2b2b2b" /><path d="M9 1h21v19H9z" fill="#f4f4f4" opacity=".92" /><path d="M9 7h14v13H9z" fill="#bdbdbd" /></svg></Slot>
        <Slot><svg width="30" height="28" viewBox="0 0 30 28"><circle cx="24" cy="7" r="3.500" fill="#5059c9" /><circle cx="15" cy="5" r="4.500" fill="#7b83eb" /><path d="M18 11h12v8q0 5-6 5t-6-5z" fill="#5059c9" /><path d="M8 11h15v10q0 7-7.500 7T8 21z" fill="#7b83eb" /><rect y="8" width="14" height="14" rx="1.500" fill="#4b53bc" /><text x="7" y="19" fontSize="11" fontWeight="700" fill="#fff" textAnchor="middle">T</text></svg></Slot>
        <Slot><svg width="30" height="30" viewBox="0 0 30 30"><path d="M0 10l3-2.500L24 24l-2 6z" fill="#0a6fb8" /><path d="M0 20l3 2.500L24 6l-2-6z" fill="#1a8cd8" /><path d="M22 0l8 3.500v23L22 30z" fill="#2aa7f2" /></svg></Slot>
        <Slot><svg width="30" height="28" viewBox="0 0 30 28"><defs><linearGradient id="c1" x1="0" y1="0" x2="0" y2="1"><stop offset="0" stopColor="#1b8ff0" /><stop offset=".6" stopColor="#38b48a" /><stop offset="1" stopColor="#f4c430" /></linearGradient><linearGradient id="c2" x1="0" y1="0" x2="0" y2="1"><stop offset="0" stopColor="#a45ff0" /><stop offset=".5" stopColor="#f0609a" /><stop offset="1" stopColor="#ff9350" /></linearGradient></defs><path d="M9 0h9q3 0 2 4l-4 15q-1 4-4 4H4q-5 0-4-5L4 5q1-5 5-5z" fill="url(#c1)" /><path d="M21 28h-9q-3 0-2-4l4-15q1-4 4-4h8q5 0 4 5l-4 13q-1 5-5 5z" fill="url(#c2)" /><path d="M13 9h5l-4 11h-4z" fill="#eeeeee" /></svg></Slot>
        <Slot><Tile from="bg-[linear-gradient(135deg,#087cfa,#1b1b3a_50%,#fe2857)]" label="IJ" /></Slot>
        <Slot><svg width="30" height="30" viewBox="0 0 30 30"><path fillRule="evenodd" d="M15 0a14.500 15 0 1 0 0 30a14.500 15 0 1 0 0-30M15 4.500c4 0 6 4.500 6 10.500s-2 10.500-6 10.500S9 21 9 15s2-10.500 6-10.500z" fill="#f0132b" /></svg></Slot>
        <Slot><svg width="30" height="30" viewBox="0 0 30 30"><defs><linearGradient id="e1" x1="0" y1="0" x2="1" y2="0"><stop offset="0" stopColor="#1aa0e8" /><stop offset="1" stopColor="#55d86b" /></linearGradient></defs><path d="M0 15A15 15 0 0 1 15 0q14 1 15 12-1 7-8 7-5 0-4-3Q19 9 11 9 3 9 0 15z" fill="url(#e1)" /><path d="M0 15Q2 7 10 7.500q8 .5 8 6-6 0-5 6 2 6 14 4.500Q23 30 15 30 2 29 0 15z" fill="#1070c8" /></svg></Slot>
        <Slot><svg width="30" height="30" viewBox="0 0 30 30"><circle cx="15" cy="15" r="15" fill="#34a853" /><path d="M2 7.500A15 15 0 0 1 28 7.500H15L9 18z" fill="#ea4335" /><path d="M28 7.500A15 15 0 0 1 14.500 30L21 18q2-4-1-10.500z" fill="#fbbc05" /><circle cx="15" cy="15" r="7.500" fill="#fff" /><circle cx="15" cy="15" r="5.800" fill="#4285f4" /></svg></Slot>
        <Slot><Tile from="bg-[linear-gradient(135deg,#21d789,#0e5a38_60%,#c8e64a)]" label="PE" /></Slot>
        <Slot><Brave s={29} /></Slot>
        <Slot><svg width="29" height="29" viewBox="0 0 29 29" fill="none" stroke="#111" strokeLinecap="round"><circle cx="14.500" cy="14.500" r="14.500" fill="#1ed760" stroke="none" /><path d="M6 10q9-3 17 1.500" strokeWidth="3" /><path d="M7 15q8-2.500 15 1.500" strokeWidth="2.500" /><path d="M8 19.500q7-2 12.500 1.200" strokeWidth="2" /></svg></Slot>
        <Slot dot><svg width="30" height="27" viewBox="0 0 30 27"><path d="M0 3q0-3 3-3h7l3 4h14q3 0 3 3v19H0z" fill="#d99a1c" /><path d="M0 7h30v18q0 2-2 2H2q-2 0-2-2z" fill="#ffd257" /><path d="M5 27v-6q0-2 2-2h16q2 0 2 2v6z" fill="#1372c4" /></svg></Slot>
        <Slot><svg width="29" height="29" viewBox="0 0 29 29"><path d="M9 8V3q0-2 2-2h7q2 0 2 2v5" fill="none" stroke="#2aa8e8" strokeWidth="2" /><path d="M0 7h29v18q0 4-4 4H4q-4 0-4-4z" fill="#155a98" /><path d="M9 12h5v5H9z" fill="#f25022" /><path d="M15 12h5v5h-5z" fill="#7fba00" /><path d="M9 18h5v5H9z" fill="#00a4ef" /><path d="M15 18h5v5h-5z" fill="#ffb900" /></svg></Slot>
        <Slot><svg width="29" height="29" viewBox="0 0 29 29" fill="none" strokeWidth="2.500"><circle cx="14.500" cy="14.500" r="14.500" fill="#fff" /><path d="M14.500 6L8 22M14.500 6L21 22M14.500 3v4" stroke="#3b82f0" /><path d="M6 16q9 5 17-1" stroke="#3b82f0" /><circle cx="20" cy="13" r="3" fill="#35c37d" /></svg></Slot>
        <Slot dot><svg width="32" height="32" viewBox="0 0 32 32" fill="none"><circle cx="15" cy="17" r="14.500" fill="#f9401c" /><path d="M6 11l5 12 4-9 4 9 5-13" stroke="#fff" strokeWidth="2.600" /><circle cx="26" cy="6" r="6" fill="#e8616a" /><text x="26" y="9.500" fontSize="10" fill="#fff" textAnchor="middle">P</text></svg></Slot>
        <div className={slot}><span className="flex h-[48px] w-[48px] items-center justify-center rounded-[5px] border border-[#e3e3e3] bg-[#fafafa]"><Brave s={29} /></span><span className="absolute bottom-[4px] h-[4px] w-[17px] rounded-full bg-[#0a78d4]" /></div>
        <Slot dot><svg width="30" height="30" viewBox="0 0 30 30"><rect width="30" height="30" rx="3" fill="#1e1e1e" /><path d="M15 5h-2.500a3.300 3.300 0 0 0 0 6.600H15z" fill="#f24e1e" /><path d="M15 5h2.500a3.300 3.300 0 0 1 0 6.600H15z" fill="#ff7262" /><path d="M15 11.600h-2.500a3.300 3.300 0 0 0 0 6.600H15z" fill="#a259ff" /><circle cx="18.200" cy="15" r="3.300" fill="#1abcfe" /><path d="M15 18.200h-2.500a3.300 3.300 0 1 0 2.500 3.300z" fill="#0acf83" /></svg></Slot>
      </div>
      <svg className="mt-auto ml-[14px]" width="30" height="13" viewBox="0 0 30 13" fill="none"><path d="M1 1h18v12" stroke="#d9542b" strokeWidth="3" strokeDasharray="3 1.500" /><path d="M2 2v11" stroke="#d9542b" strokeWidth="3" strokeDasharray="3 1.500" /><path d="M8 6h10v3H8z" fill="#6f6f6f" /><circle cx="25" cy="13" r="2.500" stroke="#35a6e0" strokeWidth="1.500" /></svg>
      <div className="absolute top-0 right-0 flex h-full w-[335px] items-center">
        <svg width="20" height="20" viewBox="0 0 20 20" fill="none" stroke="#1f1f1f" strokeWidth="1.700"><path d="M4 13l6-6 6 6" /></svg>
        <svg className="ml-[19px]" width="22" height="20" viewBox="0 0 22 20"><path d="M6 14q-5 0-5-4t4-4q2-5 7-4 5 1 5 6v6z" fill="#8a8a8a" stroke="#444" strokeWidth="1.500" /><circle cx="15" cy="14" r="6" fill="#d9283a" /><path d="M13 12l4 4M17 12l-4 4" stroke="#fff" strokeWidth="1.500" /></svg>
        <div className="ml-[16px] w-[42px] text-center text-[14.500px] leading-[20px] tracking-[-0.200px]">ENG<br />IN</div>
        <svg className="ml-[16px]" width="20" height="18" viewBox="0 0 20 18" fill="none" stroke="#1f1f1f" strokeWidth="1.500"><path d="M1 6.500q9-8 18 0M4 9.500q6-5.500 12 0M6.500 12.300q3.500-3 7 0" /><circle cx="10" cy="15" r="1.200" fill="#1f1f1f" /></svg>
        <svg className="ml-[10px]" width="21" height="18" viewBox="0 0 21 18" fill="none" stroke="#1f1f1f" strokeWidth="1.400"><path d="M1 6.500h3.500L9 2.500v13l-4.500-4H1zM11.500 6.500q2 2.500 0 5M14 4.500q4 4.500 0 9M16.500 2.500q6 6.500 0 13" /></svg>
        <svg className="ml-[8px]" width="21" height="18" viewBox="0 0 21 18" fill="none" stroke="#1f1f1f" strokeWidth="1.500"><rect x="3" y="4" width="15" height="11" rx="2" /><path d="M9 6h7v7H6z" fill="#1f1f1f" stroke="none" /><path d="M19.500 7.500v4" strokeWidth="2" /><path d="M4.500 0L1 6h3L2.500 10 8 4H5z" fill="#1f1f1f" stroke="#eee" strokeWidth=".5" /></svg>
        <div className="mr-[22px] ml-auto text-right text-[15px] leading-[20px]">11:49<br />13-05-2025</div>
      </div>
    </footer>
  );
}

export default function App() {
  return (
    <div className="relative flex h-[1148px] w-[1918px] flex-col overflow-hidden bg-white font-['Inter',sans-serif] [font-feature-settings:'cv05','cv08','cv11']">
      <BrowserChrome />
      <Header />
      <div className="flex h-[936px]">
        <Sidebar />
        <main className="min-w-0 grow overflow-hidden">
          <ProjectHeader />
          <Filters />
          <div className="mt-[45px] flex pl-10">
            <IssueList />
            <div className="flex grow flex-col">
              <div className="flex h-10 items-start justify-end pr-[38px]">
                <span className="flex h-[30px] w-[30px] items-center justify-center rounded-[4px] bg-[#f8f8f8] text-[#b7b9be]"><Ic d={P.up} s={19} /></span>
                <span className="ml-[5px] flex h-[30px] w-[30px] items-center justify-center text-[#292a2e]"><Ic d={P.down} s={19} className="translate-y-px" /></span>
              </div>
              <div className="flex"><Issue /><Scrollbar /><Details /></div>
            </div>
          </div>
        </main>
      </div>
      <Taskbar />
      <Floaters />
    </div>
  );
}
